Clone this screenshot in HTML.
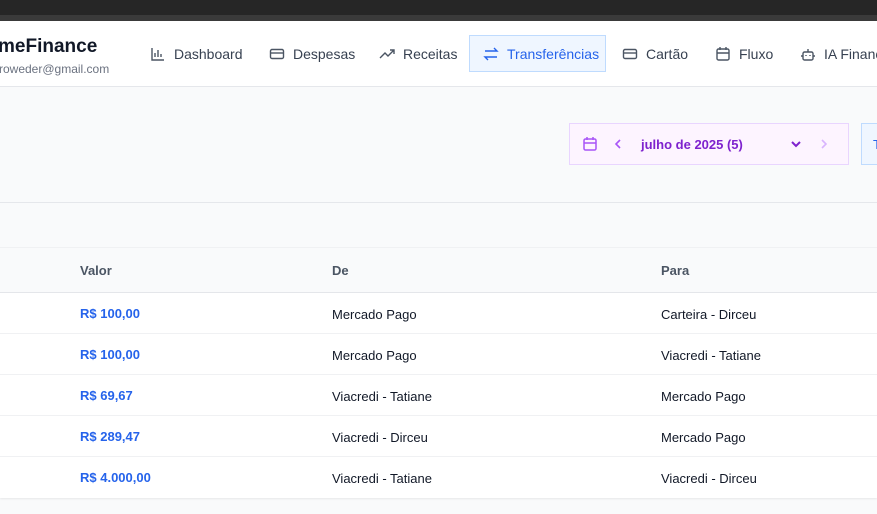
<!DOCTYPE html>
<html><head><meta charset="utf-8"><style>
*{box-sizing:border-box;margin:0;padding:0}
body{width:877px;height:514px;overflow:hidden;background:#f9fafb;font-family:"Liberation Sans",sans-serif;position:relative}
.a{position:absolute}
.nav{font-size:14px;color:#374151;display:flex;align-items:center;gap:8px;height:37px;top:35px;white-space:nowrap}
svg{display:block;flex-shrink:0}
.td{position:absolute;font-size:13px;color:#111827;white-space:nowrap}
.v{color:#2563eb;font-weight:bold;font-size:13px}
</style></head><body>
<div class="a" style="left:0;top:0;width:877px;height:15px;background:#262626"></div>
<div class="a" style="left:0;top:15px;width:877px;height:6px;background:#3a3a3a"></div>
<div class="a" style="left:0;top:21px;width:877px;height:66px;background:#fff;border-bottom:1px solid #e5e7eb"></div>
<div class="a" style="left:-2px;top:36px;font-size:19px;font-weight:bold;color:#111827">meFinance</div>
<div class="a" style="left:-1px;top:62px;font-size:12px;color:#6b7280">roweder@gmail.com</div>

<div class="a nav" style="left:150px"><svg width="16" height="16" viewBox="0 0 16 16" fill="none" stroke="#4b5563" stroke-width="1.4"><path d="M2 2v12h12M5 11V7M8 11V4M11 11V8"/></svg>Dashboard</div>
<div class="a nav" style="left:269px"><svg width="16" height="16" viewBox="0 0 16 16" fill="none" stroke="#4b5563" stroke-width="1.4"><rect x="1.5" y="3.5" width="13" height="9" rx="1.5"/><path d="M1.5 7h13"/></svg>Despesas</div>
<div class="a nav" style="left:379px"><svg width="16" height="16" viewBox="0 0 16 16" fill="none" stroke="#4b5563" stroke-width="1.4"><path d="M1 12l5-5 3 3 6-6M11 4h4v4"/></svg>Receitas</div>
<div class="a nav" style="left:469px;width:137px;padding-left:13px;background:#eff6ff;border:1px solid #bfdbfe;color:#2563eb"><svg width="16" height="16" viewBox="0 0 16 16" fill="none" stroke="#2563eb" stroke-width="1.4"><path d="M2 5h12l-3-3M14 11H2l3 3"/></svg>Transferências</div>
<div class="a nav" style="left:622px"><svg width="16" height="16" viewBox="0 0 16 16" fill="none" stroke="#4b5563" stroke-width="1.4"><rect x="1.5" y="3.5" width="13" height="9" rx="1.5"/><path d="M1.5 7h13"/></svg>Cartão</div>
<div class="a nav" style="left:715px"><svg width="16" height="16" viewBox="0 0 16 16" fill="none" stroke="#4b5563" stroke-width="1.4"><rect x="2" y="3" width="12" height="11" rx="1.5"/><path d="M2 7h12M5 1v3M11 1v3"/></svg>Fluxo</div>
<div class="a nav" style="left:800px"><svg width="16" height="16" viewBox="0 0 16 16" fill="none" stroke="#4b5563" stroke-width="1.4"><rect x="3" y="6" width="10" height="8" rx="1.5"/><path d="M8 6V3M1 10h2M13 10h2M6 9v1M10 9v1"/></svg>IA Financeiro</div>

<div class="a" style="left:569px;top:123px;width:280px;height:42px;background:#fdf4ff;border:1px solid #e9d5ff"></div>
<svg class="a" style="left:582px;top:136px" width="16" height="16" viewBox="0 0 16 16" fill="none" stroke="#a855f7" stroke-width="1.5"><rect x="2" y="3" width="12" height="11" rx="1.5"/><path d="M2 7h12M5 1v3M11 1v3"/></svg>
<svg class="a" style="left:613px;top:138px" width="10" height="12" viewBox="0 0 10 12" fill="none" stroke="#a855f7" stroke-width="1.6"><path d="M7 2L3 6l4 4"/></svg>
<div class="a" style="left:641px;top:137px;font-size:13px;font-weight:bold;color:#7e22ce">julho de 2025 (5)</div>
<svg class="a" style="left:790px;top:139px" width="12" height="10" viewBox="0 0 12 10" fill="none" stroke="#7e22ce" stroke-width="2"><path d="M2 3l4 4 4-4"/></svg>
<svg class="a" style="left:819px;top:138px" width="10" height="12" viewBox="0 0 10 12" fill="none" stroke="#d8b4fe" stroke-width="1.6"><path d="M3 2l4 4-4 4"/></svg>
<div class="a" style="left:861px;top:123px;width:30px;height:42px;background:#eff6ff;border:1px solid #bfdbfe"></div>
<div class="a" style="left:873px;top:137px;font-size:13px;color:#2563eb">T</div>

<div class="a" style="left:0;top:202px;width:877px;height:1px;background:#e5e7eb"></div>
<div class="a" style="left:0;top:247px;width:877px;height:46px;background:#f9fafb;border-top:1px solid #f0f1f3;border-bottom:1px solid #e5e7eb"></div>
<div class="a" style="left:80px;top:263px;font-size:13px;font-weight:bold;color:#4b5563">Valor</div>
<div class="a" style="left:332px;top:263px;font-size:13px;font-weight:bold;color:#4b5563">De</div>
<div class="a" style="left:661px;top:263px;font-size:13px;font-weight:bold;color:#4b5563">Para</div>

<div class="a" style="left:0;top:293px;width:877px;height:205px;background:#fff;box-shadow:0 1px 2px rgba(0,0,0,.08)"></div>
<div class="a" style="left:0;top:333px;width:877px;height:1px;background:#f0f1f3"></div>
<div class="a" style="left:0;top:374px;width:877px;height:1px;background:#f0f1f3"></div>
<div class="a" style="left:0;top:415px;width:877px;height:1px;background:#f0f1f3"></div>
<div class="a" style="left:0;top:456px;width:877px;height:1px;background:#f0f1f3"></div>

<div class="td v" style="left:80px;top:306px">R$ 100,00</div><div class="td" style="left:332px;top:307px">Mercado Pago</div><div class="td" style="left:661px;top:307px">Carteira - Dirceu</div>
<div class="td v" style="left:80px;top:347px">R$ 100,00</div><div class="td" style="left:332px;top:348px">Mercado Pago</div><div class="td" style="left:661px;top:348px">Viacredi - Tatiane</div>
<div class="td v" style="left:80px;top:388px">R$ 69,67</div><div class="td" style="left:332px;top:389px">Viacredi - Tatiane</div><div class="td" style="left:661px;top:389px">Mercado Pago</div>
<div class="td v" style="left:80px;top:429px">R$ 289,47</div><div class="td" style="left:332px;top:430px">Viacredi - Dirceu</div><div class="td" style="left:661px;top:430px">Mercado Pago</div>
<div class="td v" style="left:80px;top:470px">R$ 4.000,00</div><div class="td" style="left:332px;top:471px">Viacredi - Tatiane</div><div class="td" style="left:661px;top:471px">Viacredi - Dirceu</div>
</body></html>
